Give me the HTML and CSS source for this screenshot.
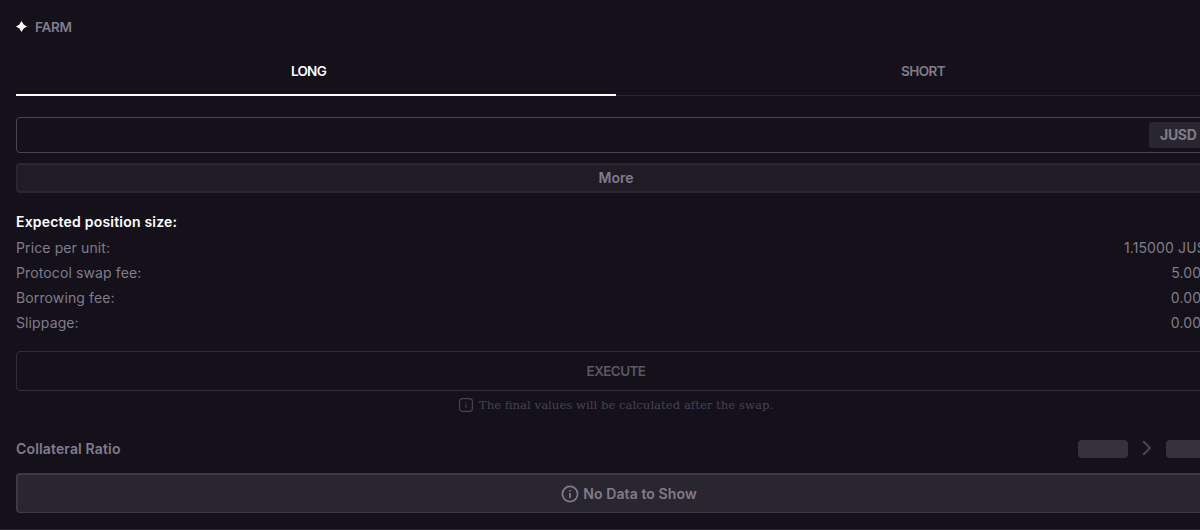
FILE: index.html
```html
<!DOCTYPE html>
<html lang="en">
<head>
<meta charset="utf-8">
<title>Farm</title>
<link rel="stylesheet" href="styles.css">
</head>
<body>
<main class="farm">
  <header class="heading">
    <svg class="star" width="11" height="11" viewBox="0 0 11 11"><path d="M5.5 0L7.6 3.4L11 5.5L7.6 7.6L5.5 11L3.4 7.6L0 5.5L3.4 3.4Z" fill="#fff"/></svg>
    <span class="heading-text">FARM</span>
  </header>
  <nav class="tabs">
    <div class="tab tab-active"><span class="tab-long">LONG</span></div>
    <div class="tab"><span class="tab-short">SHORT</span></div>
  </nav>
  <div class="amount"><div class="token"><span class="token-text">JUSD</span></div></div>
  <div class="more"><span class="more-text">More</span></div>
  <section class="summary">
    <div class="row row-title"><span class="title-text">Expected position size:</span></div>
    <div class="row"><span>Price per unit:</span><span>1.15000 JUSD</span></div>
    <div class="row"><span>Protocol swap fee:</span><span class="percent">5.00%</span></div>
    <div class="row"><span>Borrowing fee:</span><span class="percent">0.00%</span></div>
    <div class="row"><span>Slippage:</span><span class="percent">0.00%</span></div>
  </section>
  <div class="execute"><span class="execute-text">EXECUTE</span></div>
  <div class="note">
    <svg width="14" height="14" viewBox="0 0 14 14" fill="none" stroke="#46424f"><rect x=".6" y=".6" width="12.8" height="12.8" rx="2.8" stroke-width="1.2"/><path d="M7 6v4M7 4v1"/></svg>
    <span class="note-text">The final values will be calculated after the swap.</span>
  </div>
  <div class="ratio">
    <span class="ratio-text">Collateral Ratio</span>
    <div class="ratio-values">
      <span class="skeleton"></span>
      <svg class="chevron" width="10" height="16" viewBox="0 0 10 16" fill="none" stroke="#494552" stroke-width="2"><path d="M1.2 1.2L8 8L1.2 14.8"/></svg>
      <span class="skeleton"></span>
    </div>
  </div>
  <div class="empty">
    <svg width="18" height="18" viewBox="0 0 18 18" fill="none" stroke="#817c8a" stroke-width="1.7"><circle cx="9" cy="9" r="7.6"/><path d="M9 8v5M9 5v1.6"/></svg>
    <span class="empty-text">No Data to Show</span>
  </div>
</main>
</body>
</html>
```
FILE: styles.css
```css
* { box-sizing: border-box; }
html { overflow: hidden; background: #14111b; }
body {
  margin: 0;
  height: 530px;
  overflow: hidden;
  border-bottom: 1px solid #2a2632;
  font-family: Inter, sans-serif;
  font-size: 14px;
  font-weight: 600;
  color: #817c8a;
  white-space: nowrap;
}
.farm { width: 1216px; padding: 13px 0 0 16px; }
.heading { display: flex; align-items: center; gap: 8px; height: 27px; }
.heading-text { font-size: 13.5px; letter-spacing: -0.3px; }
.tabs { display: grid; grid-template-columns: 600px 600px; height: 56px; border-bottom: 1px solid #292630; }
.tab { display: flex; align-items: center; justify-content: center; height: 56px; padding: 6px 0 0 14px; font-size: 13.5px; }
.tab-active { padding: 8px 15px 0 0; color: #fff; border-bottom: 2px solid #fff; }
.tab-long { letter-spacing: -0.7px; }
.tab-short { letter-spacing: -0.6px; }
.amount {
  display: flex; justify-content: flex-end; align-items: center;
  height: 36px; margin-top: 21px; padding-right: 4px;
  border: 1px solid #494552; border-radius: 4px;
}
.token { display: flex; align-items: center; width: 62px; height: 26px; padding: 0 0 1px 11px; border-radius: 3px; background: #292630; }
.token-text { letter-spacing: -0.3px; font-weight: 700; }
.more {
  display: flex; align-items: center; justify-content: center;
  height: 30px; margin-top: 10px;
  border: 2px solid #292630; border-radius: 4px; background: #1f1c26;
}
.more-text { padding-bottom: 1px; }
.summary { margin-top: 17px; font-weight: 400; letter-spacing: 0.12px; }
.row { display: flex; justify-content: space-between; align-items: center; height: 25px; }
.row-title { padding-bottom: 2px; color: #fff; font-weight: 600; letter-spacing: 0.2px; }
.percent { padding-right: 1px; }
.execute {
  display: flex; align-items: center; justify-content: center;
  height: 40px; margin-top: 16px;
  border: 1px solid #312e38; border-radius: 4px; color: #5b5763;
}
.execute-text { font-size: 13.5px; letter-spacing: -0.6px; }
.note {
  display: flex; align-items: center; justify-content: center; gap: 6px;
  height: 28px; color: #46424f;
  font: 400 11.7px "DejaVu Serif", serif;
}
.ratio { display: flex; justify-content: space-between; align-items: center; height: 18px; margin-top: 21px; }
.ratio-text { padding-bottom: 2px; letter-spacing: 0.15px; }
.ratio-values { display: flex; align-items: center; gap: 14px; }
.chevron { margin-bottom: 2px; }
.skeleton { width: 50px; height: 18px; border-radius: 4px; background: #35323c; }
.empty {
  display: flex; align-items: center; justify-content: center; gap: 4px;
  height: 40px; margin-top: 15px; padding-left: 26px;
  border: 2px solid #3d3945; border-bottom-width: 1px; border-radius: 4px; background: #292630;
}
.empty-text { letter-spacing: 0.1px; }
```
